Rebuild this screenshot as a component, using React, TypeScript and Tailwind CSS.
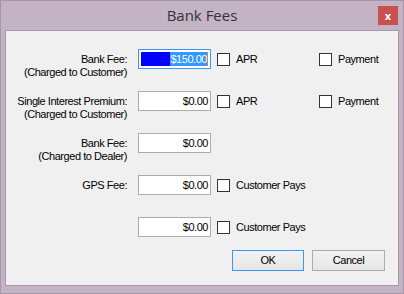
import * as React from 'react';

// 金额输入框
function MoneyInput({ value, selected }: { value: string; selected?: boolean }) {
  if (selected) {
    return (
      <div className="w-[73px] h-[20px] border border-[#3399ff] bg-white p-[2px] shrink-0">
        <div className="h-full bg-[#0000ff] flex justify-end items-center">
          <span className="bg-[#3399ff] text-white leading-[14px]">{value}</span>
          <span className="w-[1px] h-[14px] bg-[#ff8000]" />
        </div>
      </div>
    );
  }
  return (
    <div className="w-[73px] h-[20px] border border-[#acacac] bg-white flex items-center justify-end pr-[2px] shrink-0">
      {value}
    </div>
  );
}

function Check({ label }: { label: string }) {
  return (
    <div className="flex items-center">
      <span className="w-[13px] h-[13px] border border-[#333333] bg-white shrink-0" />
      <span className="ml-[6px]">{label}</span>
    </div>
  );
}

function Row({
  line1,
  line2,
  value,
  selected,
  children,
}: {
  line1?: string;
  line2?: string;
  value: string;
  selected?: boolean;
  children?: React.ReactNode;
}) {
  return (
    <div className="flex items-start h-[42px]">
      <div className="w-[121px] text-right leading-[13px] pt-[4px]">
        {line1 && <div>{line1}</div>}
        {line2 && <div>{line2}</div>}
      </div>
      <div className="ml-[11px]">
        <MoneyInput value={value} selected={selected} />
      </div>
      <div className="flex items-center h-[20px] ml-[6px]">{children}</div>
    </div>
  );
}

export default function App() {
  return (
    <div className="w-[404px] h-[294px] bg-[#c3b3c5] border border-[#a596a8] flex flex-col">
      {/* 标题栏 */}
      <div className="relative h-[29px] flex items-center justify-center">
        <span className="text-[15px] text-[#333333] pb-[1px]" style={{ fontFamily: '"Open Sans", sans-serif' }}>
          Bank Fees
        </span>
        <div className="absolute right-[5px] top-[5px] w-[20px] h-[19px] bg-[#c75050] flex items-center justify-center text-white text-[11px] font-bold leading-none">
          x
        </div>
      </div>

      {/* 内容区 */}
      <div
        className="mx-[4px] w-[394px] h-[256px] bg-[#f0f0f0] border border-[#a797a9] text-[11px] tracking-[-0.45px] text-black flex flex-col"
        style={{ fontFamily: '"Liberation Sans", Arial, sans-serif' }}
      >
        <div className="pt-[18px]">
          <Row line1="Bank Fee:" line2="(Charged to Customer)" value="$150.00" selected>
            <div className="w-[102px]">
              <Check label="APR" />
            </div>
            <Check label="Payment" />
          </Row>
          <Row line1="Single Interest Premium:" line2="(Charged to Customer)" value="$0.00">
            <div className="w-[102px]">
              <Check label="APR" />
            </div>
            <Check label="Payment" />
          </Row>
          <Row line1="Bank Fee:" line2="(Charged to Dealer)" value="$0.00" />
          <Row line1="GPS Fee:" value="$0.00">
            <Check label="Customer Pays" />
          </Row>
          <Row value="$0.00">
            <Check label="Customer Pays" />
          </Row>
        </div>

        <div className="flex justify-end gap-[8px] pr-[13px] mt-[-9px]">
          <button className="w-[72px] h-[21px] border border-[#3399ff] bg-gradient-to-b from-[#f2f2f2] to-[#e6e6e6]">
            OK
          </button>
          <button className="w-[73px] h-[21px] border border-[#acacac] bg-gradient-to-b from-[#f2f2f2] to-[#e6e6e6]">
            Cancel
          </button>
        </div>
      </div>
    </div>
  );
}
